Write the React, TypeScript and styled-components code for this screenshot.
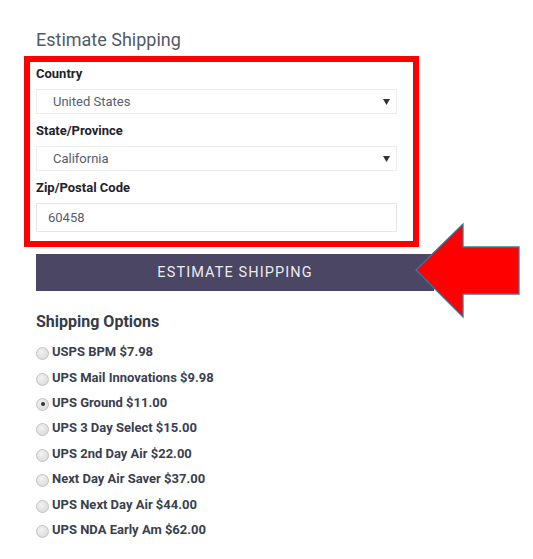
import styled, { createGlobalStyle } from "styled-components";

const SHIPPING_OPTIONS = [
  { id: "usps-bpm", label: "USPS BPM $7.98" },
  { id: "ups-mail", label: "UPS Mail Innovations $9.98" },
  { id: "ups-ground", label: "UPS Ground $11.00", checked: true },
  { id: "ups-3day", label: "UPS 3 Day Select $15.00" },
  { id: "ups-2nd", label: "UPS 2nd Day Air $22.00" },
  { id: "nda-saver", label: "Next Day Air Saver $37.00" },
  { id: "ups-nda", label: "UPS Next Day Air $44.00" },
  { id: "nda-early", label: "UPS NDA Early Am $62.00" },
];

const GlobalStyle = createGlobalStyle`
  body {
    margin: 0;
    background: #ffffff;
    font-family: Roboto, "Liberation Sans", sans-serif;
  }
`;

const Caret = () => (
  <svg width="7" height="6" viewBox="0 0 7 6">
    <polygon points="0,0 7,0 3.5,6" fill="#333333" />
  </svg>
);

const CalloutArrow = () => (
  <StyledArrow width="108" height="98" viewBox="0 0 108 98">
    <polygon
      points="2,48 49,2 49,25 105,25 105,72 49,72 49,95"
      fill="#ff0000"
      stroke="#41719c"
      strokeWidth="1.3"
      strokeLinejoin="miter"
    />
  </StyledArrow>
);

const App = () => {
  return (
    <StyledPage>
      <GlobalStyle />
      <StyledTitle>Estimate Shipping</StyledTitle>

      <StyledHighlight>
        <StyledLabel>Country</StyledLabel>
        <StyledSelect>
          <span>United States</span>
          <Caret />
        </StyledSelect>

        <StyledLabel>State/Province</StyledLabel>
        <StyledSelect>
          <span>California</span>
          <Caret />
        </StyledSelect>

        <StyledLabel>Zip/Postal Code</StyledLabel>
        <StyledInput>60458</StyledInput>
      </StyledHighlight>

      <StyledButton>Estimate Shipping</StyledButton>

      <StyledSubtitle>Shipping Options</StyledSubtitle>
      <StyledOptions>
        {SHIPPING_OPTIONS.map((option) => (
          <StyledOption key={option.id}>
            <StyledRadio $checked={!!option.checked} />
            {option.label}
          </StyledOption>
        ))}
      </StyledOptions>

      <CalloutArrow />
    </StyledPage>
  );
};

const StyledPage = styled.div`
  position: relative;
  width: 533px;
  height: 559px;
  box-sizing: border-box;
  padding: 29px 0 0 36px;
  overflow: hidden;
`;

const StyledTitle = styled.h2`
  margin: 0 0 5px;
  font-size: 18px;
  line-height: 22px;
  font-weight: 400;
  color: #525a66;
`;

const StyledHighlight = styled.div`
  width: 395px;
  box-sizing: border-box;
  margin-left: -12px;
  border: 6px solid #ff0000;
  padding: 4px 16px 9px 6px;
`;

const StyledLabel = styled.div`
  font-size: 13px;
  line-height: 16px;
  font-weight: 700;
  color: #1f2229;
  margin-bottom: 7px;
`;

const StyledSelect = styled.div`
  display: flex;
  align-items: center;
  justify-content: space-between;
  height: 25px;
  box-sizing: border-box;
  border: 1px solid #ececec;
  padding: 0 6px 0 16px;
  margin-bottom: 9px;
  font-size: 13px;
  color: #565d6b;
`;

const StyledInput = styled.div`
  display: flex;
  align-items: center;
  height: 29px;
  box-sizing: border-box;
  border: 1px solid #e6e6e6;
  padding: 0 11px;
  font-size: 13px;
  color: #565d6b;
`;

const StyledButton = styled.button`
  display: block;
  width: 398px;
  height: 37px;
  margin-top: 7px;
  border: none;
  background: #4a4663;
  color: #ecebf0;
  font-family: Roboto, "Liberation Sans", sans-serif;
  font-size: 14.5px;
  letter-spacing: 1.1px;
  text-transform: uppercase;
  text-align: center;
  padding: 0 0 1px;
`;

const StyledSubtitle = styled.h3`
  margin: 21px 0 0;
  font-size: 16px;
  line-height: 20px;
  font-weight: 700;
  color: #363b48;
`;

const StyledOptions = styled.div`
  display: flex;
  flex-direction: column;
  margin-top: 7px;
`;

const StyledOption = styled.label`
  display: flex;
  align-items: center;
  gap: 3px;
  height: 25.4px;
  font-size: 13px;
  font-weight: 700;
  color: #3a3f4e;
`;

const StyledRadio = styled.span<{ $checked: boolean }>`
  position: relative;
  width: 13px;
  height: 13px;
  margin-top: 4px;
  box-sizing: border-box;
  border-radius: 50%;
  border: 1px solid #c2c2c2;
  background: radial-gradient(circle at 40% 35%, #f2f2f2 0%, #d6d6d6 100%);

  &::after {
    content: "";
    display: ${({ $checked }) => ($checked ? "block" : "none")};
    position: absolute;
    left: 3.5px;
    top: 3.5px;
    width: 4px;
    height: 4px;
    border-radius: 50%;
    background: #333333;
  }
`;

const StyledArrow = styled.svg`
  position: absolute;
  left: 414px;
  top: 222px;
`;

export default App;
